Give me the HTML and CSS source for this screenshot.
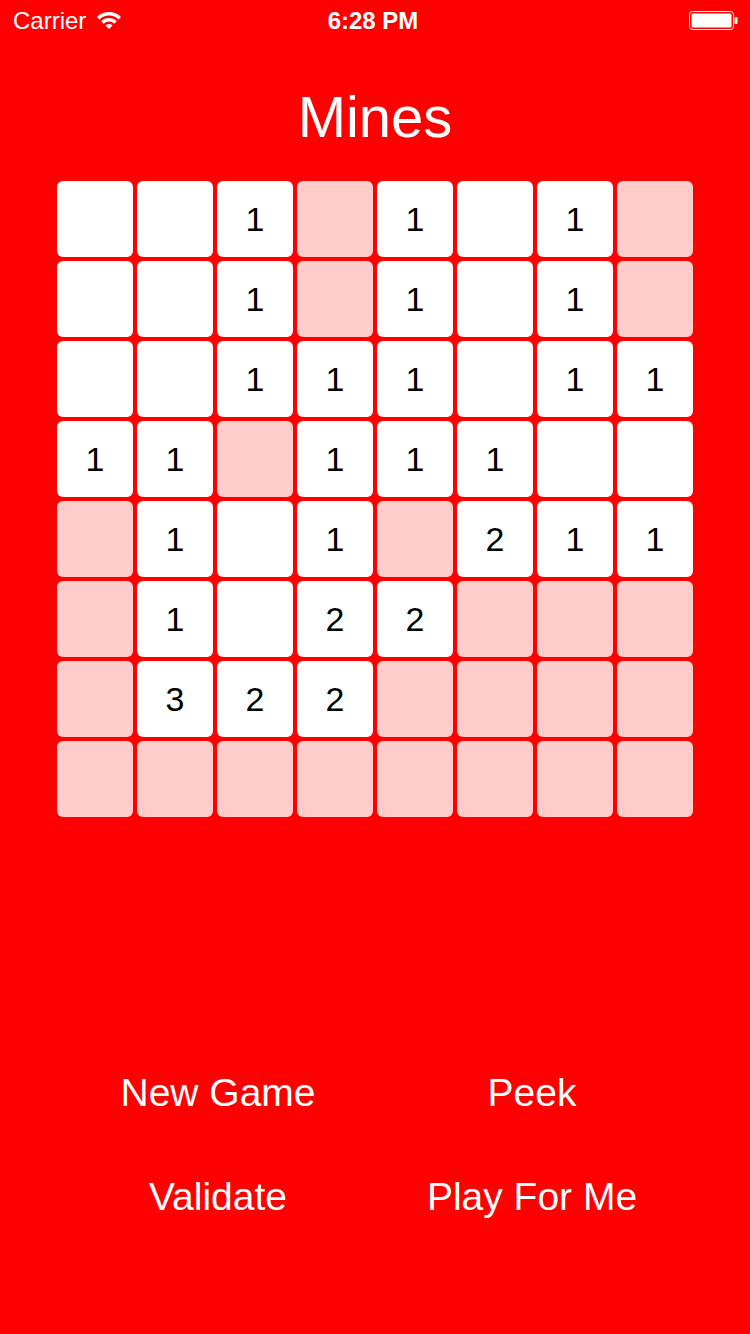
FILE: index.html
```html
<!DOCTYPE html>
<html>
<head>
<meta charset="utf-8">
<link rel="stylesheet" href="styles.css">
</head>
<body>
<div class="screen">
  <div class="statusbar">
    <div class="sb-left">
      <span class="carrier">Carrier</span>
      <svg class="wifi" width="24" height="18" viewBox="0 0 24 18">
        <path fill="#fff" d="M-0.02 5.98 A17 17 0 0 1 24.02 5.98 L21.55 8.45 A13.5 13.5 0 0 0 2.45 8.45 Z"/>
        <path fill="#fff" d="M4.22 10.22 A11 11 0 0 1 19.78 10.22 L17.30 12.70 A7.5 7.5 0 0 0 6.70 12.70 Z"/>
        <path fill="#fff" d="M12 18 L8.46 14.46 A5 5 0 0 1 15.54 14.46 Z"/>
      </svg>
    </div>
    <div class="time">6:28 PM</div>
    <div class="sb-right">
      <svg class="battery" width="50" height="19" viewBox="0 0 50 19">
        <rect x="0.5" y="0.5" width="44" height="18" rx="3" fill="none" stroke="#fff" stroke-width="1"/>
        <rect x="2.5" y="2.5" width="40" height="14" rx="1.5" fill="#fff"/>
        <rect x="45.5" y="6" width="3" height="7" rx="1" fill="#fff"/>
      </svg>
    </div>
  </div>

  <h1 class="title">Mines</h1>

  <div class="board">
    <div class="cell"></div><div class="cell"></div><div class="cell">1</div><div class="cell hidden"></div><div class="cell">1</div><div class="cell"></div><div class="cell">1</div><div class="cell hidden"></div>
    <div class="cell"></div><div class="cell"></div><div class="cell">1</div><div class="cell hidden"></div><div class="cell">1</div><div class="cell"></div><div class="cell">1</div><div class="cell hidden"></div>
    <div class="cell"></div><div class="cell"></div><div class="cell">1</div><div class="cell">1</div><div class="cell">1</div><div class="cell"></div><div class="cell">1</div><div class="cell">1</div>
    <div class="cell">1</div><div class="cell">1</div><div class="cell hidden"></div><div class="cell">1</div><div class="cell">1</div><div class="cell">1</div><div class="cell"></div><div class="cell"></div>
    <div class="cell hidden"></div><div class="cell">1</div><div class="cell"></div><div class="cell">1</div><div class="cell hidden"></div><div class="cell">2</div><div class="cell">1</div><div class="cell">1</div>
    <div class="cell hidden"></div><div class="cell">1</div><div class="cell"></div><div class="cell">2</div><div class="cell">2</div><div class="cell hidden"></div><div class="cell hidden"></div><div class="cell hidden"></div>
    <div class="cell hidden"></div><div class="cell">3</div><div class="cell">2</div><div class="cell">2</div><div class="cell hidden"></div><div class="cell hidden"></div><div class="cell hidden"></div><div class="cell hidden"></div>
    <div class="cell hidden"></div><div class="cell hidden"></div><div class="cell hidden"></div><div class="cell hidden"></div><div class="cell hidden"></div><div class="cell hidden"></div><div class="cell hidden"></div><div class="cell hidden"></div>
  </div>

  <div class="actions">
    <div class="btn">New Game</div>
    <div class="btn">Peek</div>
    <div class="btn">Validate</div>
    <div class="btn">Play For Me</div>
  </div>
</div>
</body>
</html>
```

FILE: styles.css
```css
html, body {
  margin: 0;
  padding: 0;
  background: #ff0000;
}
body {
  width: 750px;
  height: 1334px;
  overflow: hidden;
  font-family: "Liberation Sans", Arial, sans-serif;
  color: #fff;
}
.screen {
  width: 750px;
  height: 1334px;
  display: flex;
  flex-direction: column;
}
.statusbar {
  height: 40px;
  padding-top: 1px;
  display: grid;
  grid-template-columns: 1fr auto 1fr;
  align-items: center;
  font-size: 24px;
  line-height: 40px;
}
.sb-left {
  display: flex;
  align-items: center;
  padding-left: 13px;
  gap: 11px;
}
.wifi {
  display: block;
  margin-top: -2px;
}
.time {
  font-weight: bold;
  margin-left: -4px;
}
.sb-right {
  display: flex;
  justify-content: flex-end;
  padding-right: 11px;
}
.battery {
  display: block;
  margin-top: -1px;
}
.title {
  margin: 47px 0 0 0;
  font-size: 58px;
  line-height: 58px;
  font-weight: normal;
  text-align: center;
}
.board {
  margin: 35px 0 0 57px;
  display: grid;
  grid-template-columns: repeat(8, 76px);
  grid-auto-rows: 76px;
  gap: 4px;
}
.cell {
  background: #ffffff;
  border-radius: 6px;
  color: #000;
  font-size: 34px;
  display: flex;
  align-items: center;
  justify-content: center;
}
.cell.hidden {
  background: #ffcccc;
}
.actions {
  margin: 254px 0 0 61px;
  display: grid;
  grid-template-columns: 314px 314px;
  grid-auto-rows: 44px;
  row-gap: 60px;
}
.btn {
  font-size: 39px;
  line-height: 44px;
  text-align: center;
}
```
